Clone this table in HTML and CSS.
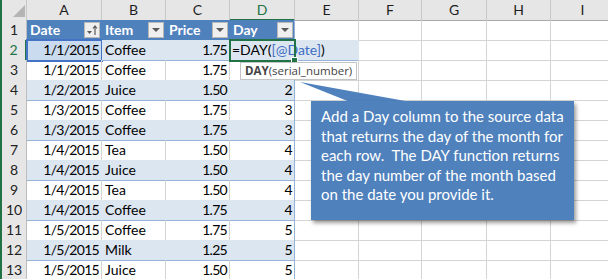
FILE: index.html
```html
<!DOCTYPE html>
<html lang="en">
<head>
    <meta charset="utf-8">
    <title>Day column</title>
    <link rel="stylesheet" href="styles.css">
</head>
<body>
<div class="sheet">
    <div class="row heads">
        <div class="corner"><svg width="24" height="19" viewBox="0 0 24 19"><polygon points="11,17 23,5 23,17" fill="#b4b4b4"/></svg></div>
        <div>A</div><div>B</div><div>C</div><div class="sel">D</div><div>E</div><div>F</div><div>G</div><div>H</div><div>I</div>
    </div>
    <div class="row">
        <div class="rh">1</div>
        <div class="th">Date <span class="dd"><svg width="14" height="14" viewBox="0 0 14 14"><polygon points="2,8 7,8 4.5,11" fill="#595959"/><path d="M10 12V3M8 5.5L10 3l2 2.5" stroke="#595959" stroke-width="1.2" fill="none"/></svg></span></div>
        <div class="th">Item <span class="dd"><svg width="14" height="14" viewBox="0 0 14 14"><polygon points="3,5 11,5 7,9" fill="#595959"/></svg></span></div>
        <div class="th">Price <span class="dd"><svg width="14" height="14" viewBox="0 0 14 14"><polygon points="3,5 11,5 7,9" fill="#595959"/></svg></span></div>
        <div class="th last">Day <span class="dd"><svg width="14" height="14" viewBox="0 0 14 14"><polygon points="3,5 11,5 7,9" fill="#595959"/></svg></span></div>
        <div></div><div></div><div></div><div></div><div></div>
    </div>
    <div class="row">
        <div class="rh cur">2</div>
        <div class="t band num ref">1/1/2015</div><div class="t band">Coffee</div><div class="t band num">1.75</div>
        <div class="t band last edit">=DAY(<span class="refname">[@Date]</span>)</div>
        <div class="band"></div><div></div><div></div><div></div><div></div>
    </div>
    <div class="row">
        <div class="rh">3</div>
        <div class="t num">1/1/2015</div><div class="t">Coffee</div><div class="t num">1.75</div><div class="t num last"></div>
        <div></div><div></div><div></div><div></div><div></div>
    </div>
    <div class="row">
        <div class="rh">4</div>
        <div class="t band num">1/2/2015</div><div class="t band">Juice</div><div class="t band num">1.50</div><div class="t band num last">2</div>
        <div></div><div></div><div></div><div></div><div></div>
    </div>
    <div class="row">
        <div class="rh">5</div>
        <div class="t num">1/3/2015</div><div class="t">Coffee</div><div class="t num">1.75</div><div class="t num last">3</div>
        <div></div><div></div><div></div><div></div><div></div>
    </div>
    <div class="row">
        <div class="rh">6</div>
        <div class="t band num">1/3/2015</div><div class="t band">Coffee</div><div class="t band num">1.75</div><div class="t band num last">3</div>
        <div></div><div></div><div></div><div></div><div></div>
    </div>
    <div class="row">
        <div class="rh">7</div>
        <div class="t num">1/4/2015</div><div class="t">Tea</div><div class="t num">1.50</div><div class="t num last">4</div>
        <div></div><div></div><div></div><div></div><div></div>
    </div>
    <div class="row">
        <div class="rh">8</div>
        <div class="t band num">1/4/2015</div><div class="t band">Juice</div><div class="t band num">1.50</div><div class="t band num last">4</div>
        <div></div><div></div><div></div><div></div><div></div>
    </div>
    <div class="row">
        <div class="rh">9</div>
        <div class="t num">1/4/2015</div><div class="t">Tea</div><div class="t num">1.50</div><div class="t num last">4</div>
        <div></div><div></div><div></div><div></div><div></div>
    </div>
    <div class="row">
        <div class="rh">10</div>
        <div class="t band num">1/4/2015</div><div class="t band">Coffee</div><div class="t band num">1.75</div><div class="t band num last">4</div>
        <div></div><div></div><div></div><div></div><div></div>
    </div>
    <div class="row">
        <div class="rh">11</div>
        <div class="t num">1/5/2015</div><div class="t">Coffee</div><div class="t num">1.75</div><div class="t num last">5</div>
        <div></div><div></div><div></div><div></div><div></div>
    </div>
    <div class="row">
        <div class="rh">12</div>
        <div class="t band num">1/5/2015</div><div class="t band">Milk</div><div class="t band num">1.25</div><div class="t band num last">5</div>
        <div></div><div></div><div></div><div></div><div></div>
    </div>
    <div class="row">
        <div class="rh">13</div>
        <div class="t num">1/5/2015</div><div class="t">Juice</div><div class="t num">1.50</div><div class="t num last">5</div>
        <div></div><div></div><div></div><div></div><div></div>
    </div>

    <!-- overlays: function hint and callout -->
    <div class="hint"><b>DAY</b>(serial_number)</div>
    <svg class="pointer" width="140" height="32" viewBox="0 0 140 32"><polygon points="10,7 65,29 132,29" fill="#4f81bd"/></svg>
    <div class="callout">
        Add a Day column to the source data<br>
        that returns the day of the month for<br>
        each row.&nbsp; The DAY function returns<br>
        the day number of the month based<br>
        on the date you provide it.
    </div>
</div>
</body>
</html>
```

FILE: styles.css
```css
body {
    margin: 0;
    width: 608px;
    height: 279px;
    overflow: hidden;
    background: #fff;
    font-family: Lato, "Liberation Sans", sans-serif;
}
.sheet {
    position: relative;
    height: 279px;
    overflow: hidden;
    border-left: 2px solid #217346;
}
.row {
    display: grid;
    grid-template-columns: 25px 75px 64px 64px 65px 64px 63px 65px 64px 64px;
    height: 20px;
}
.row > div {
    box-sizing: border-box;
    border-right: 1px solid #d4d4d4;
    border-bottom: 1px solid #d4d4d4;
    padding: 0 3px;
    font-size: 14px;
    line-height: 20px;
    white-space: nowrap;
    color: #000;
}
.heads > div {
    background: #e6e6e6;
    border-right-color: #c8c8c8;
    border-bottom: 1px solid #a8a8a8;
    text-align: center;
    font-size: 14px;
    line-height: 19px;
    color: #1e1e1e;
}
.heads > .corner {
    padding: 0;
}
.corner svg {
    display: block;
}
.heads > .sel {
    color: #217346;
    border-bottom: 2px solid #217346;
}
.row > .rh {
    background: #e6e6e6;
    border-right-color: #bdbdbd;
    border-bottom-color: #d0d0d0;
    padding: 0;
    text-align: center;
    font-size: 14px;
    color: #222;
}
.row > .rh.cur {
    color: #217346;
    border-right: 2px solid #217346;
}
.row > .th {
    display: flex;
    align-items: center;
    justify-content: space-between;
    padding: 0 1px 0 3px;
    background: #4f81bd;
    color: #fff;
    font-weight: bold;
    border-right-color: #4f81bd;
    border-bottom-color: #4f81bd;
}
.dd {
    display: flex;
    align-items: center;
    justify-content: center;
    width: 16px;
    height: 16px;
    box-sizing: border-box;
    border: 1px solid #b8b8b8;
    background: #efefef;
}
.dd svg {
    display: block;
}
.row > .t {
    border-bottom-color: #95b3d7;
}
.row > .band {
    background: #dce6f1;
    border-right-color: #dce6f1;
    border-bottom-color: #95b3d7;
}
.row > .last {
    border-right-color: #95b3d7;
}
.row > .num {
    text-align: right;
    padding: 0 2px 0 0;
    letter-spacing: -0.7px;
}
.row > .ref {
    background: #cbdbef;
    outline: 2px solid #4472c4;
    outline-offset: -1px;
}
.row > .edit {
    position: relative;
    z-index: 2;
    padding-left: 2px;
    outline: 2px solid #217346;
    outline-offset: -1px;
}
.edit::after {
    content: "";
    position: absolute;
    right: -4px;
    bottom: -4px;
    width: 5px;
    height: 5px;
    background: #217346;
    border: 1px solid #fff;
}
.refname {
    color: #3e6fc4;
}
.hint {
    position: absolute;
    left: 238px;
    top: 62px;
    z-index: 3;
    height: 18px;
    box-sizing: border-box;
    padding: 0 4px;
    border: 1px solid #c4c4c4;
    background: #fff;
    font-family: "Open Sans", sans-serif;
    font-size: 11.5px;
    line-height: 16px;
    color: #444;
    white-space: nowrap;
}
.hint b {
    color: #444;
}
.pointer {
    position: absolute;
    left: 288px;
    top: 75px;
    z-index: 3;
}
.callout {
    position: absolute;
    left: 309px;
    top: 101px;
    z-index: 3;
    width: 263px;
    height: 119px;
    box-sizing: border-box;
    padding: 6px 0 0 10px;
    background: #4f81bd;
    box-shadow: 2px 3px 4px rgba(0, 0, 0, 0.4);
    color: #fff;
    font-size: 15px;
    line-height: 19.5px;
    white-space: nowrap;
}
```
